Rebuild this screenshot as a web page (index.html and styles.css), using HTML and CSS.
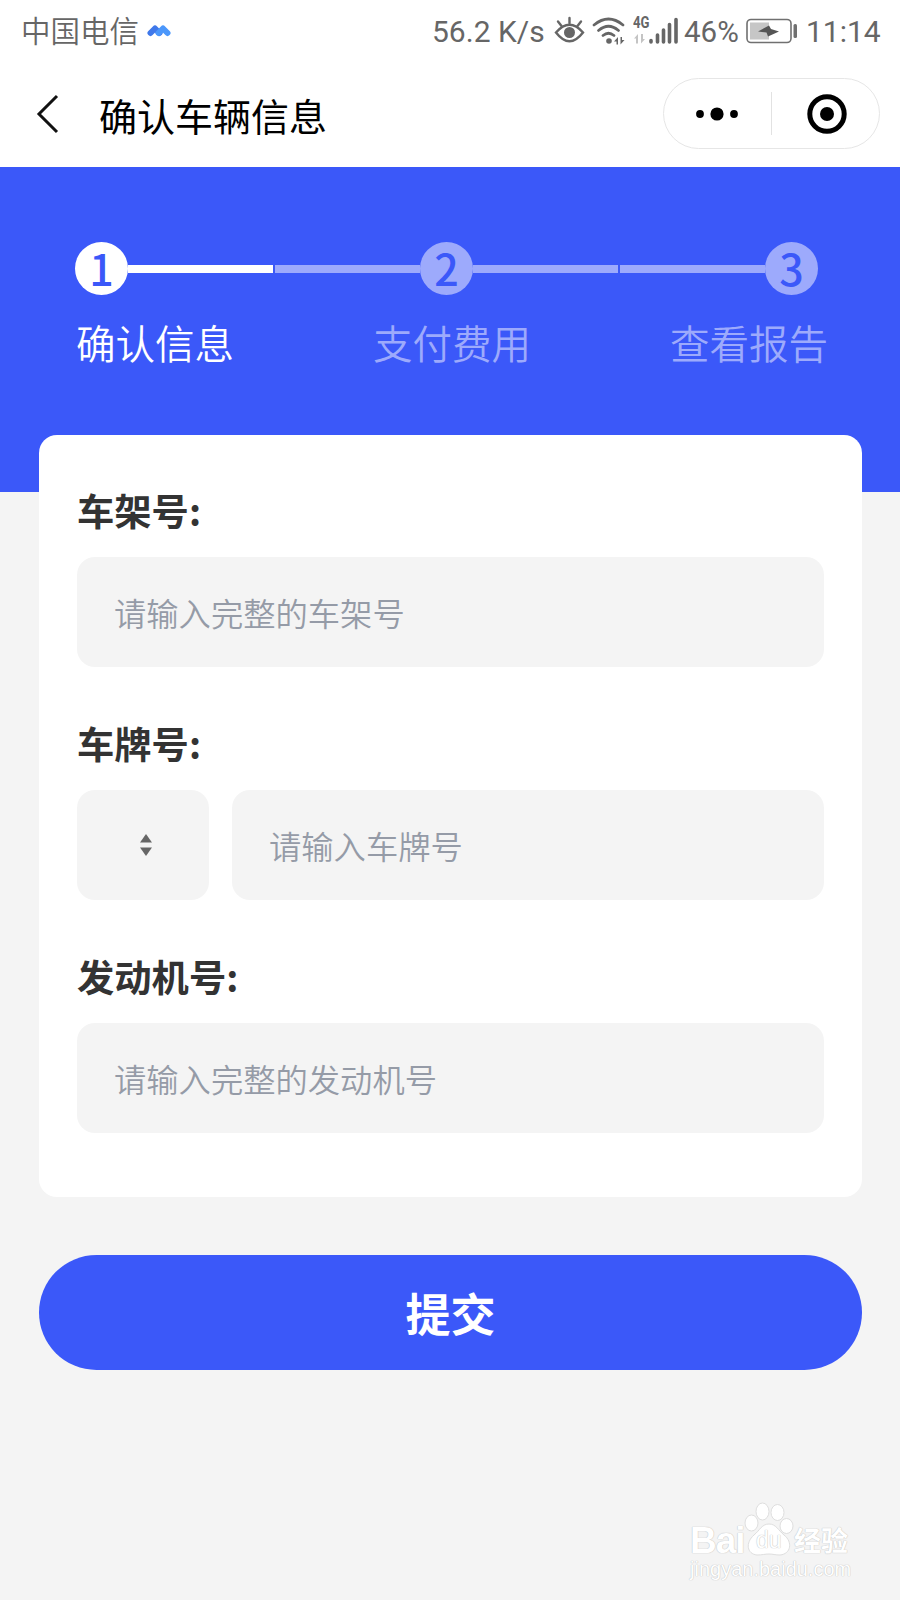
FILE: index.html
```html
<!DOCTYPE html>
<html lang="zh-CN">
<head>
    <meta charset="UTF-8">
    <meta name="viewport" content="width=device-width, initial-scale=1.0">
    <title>确认车辆信息</title>
    <link rel="stylesheet" href="styles.css">
</head>
<body>
    <div class="status-bar">
        <span class="carrier">中国电信</span>
        <svg class="carrier-icon" width="24" height="14" viewBox="0 0 24 14">
            <path d="M3.500 9L8 4.500L12.500 9" fill="none" stroke="#3f78ea" stroke-width="6" stroke-linejoin="round" stroke-linecap="round"/>
            <path d="M11.500 9L16 4.500L20.500 9" fill="none" stroke="#4b97fb" stroke-width="6" stroke-linejoin="round" stroke-linecap="round"/>
        </svg>
        <span class="speed">56.2 K/s</span>
        <svg class="eye-icon" width="31" height="28" viewBox="0 0 31 28" fill="none" stroke="#666" stroke-width="2.400" stroke-linecap="round">
            <path d="M2 16.500Q15.500 1 29 16.500Q15.500 34 2 16.500Z"/>
            <path d="M15.500 2V7M4 5.500L7.500 10M27 5.500L23.500 10"/>
            <circle cx="15.500" cy="16.500" r="5.500" fill="#666" stroke="none"/>
        </svg>
        <svg class="wifi-icon" width="34" height="28" viewBox="0 0 34 28" fill="none" stroke="#666" stroke-width="2.700" stroke-linecap="round">
            <path d="M2 8Q16.500 -4 31 8M6.500 13.500Q16.500 5 26.500 13.500M11 18.500Q16.500 14 22 18.500"/>
            <circle cx="17" cy="24" r="2.800" fill="#666" stroke="none"/>
            <path d="M22 24.500L26 20V27.500H24.500V24.500ZM32.500 23L28.500 27.500V20H30V23Z" fill="#666" stroke="none"/>
        </svg>
        <div class="signal">
            <span class="network">4G</span>
            <svg width="46" height="28" viewBox="0 0 46 28">
                <path d="M1 21.500L5 17V26.500H3V21.500ZM12 22L8 26.500V17H10V22Z" fill="#c4c4c4"/>
                <path d="M18 23.500V25M24.500 18V25M30.500 13V25M36.500 7.500V25M43 2.500V25" stroke="#666" stroke-width="3.600" stroke-linecap="round"/>
            </svg>
        </div>
        <span class="percent">46%</span>
        <svg class="battery-icon" width="52" height="26" viewBox="0 0 52 26">
            <rect x="1" y="1.500" width="44" height="23" rx="4" fill="#fff" stroke="#707070" stroke-width="1.600"/>
            <rect x="4" y="4.500" width="19" height="17" fill="#c6c6c6"/>
            <path d="M12 13.500L23 7.500L25 11L33 13.500L22 18.500L20.500 14.500Z" fill="#555"/>
            <rect x="47.500" y="6" width="3.500" height="14" rx="1.500" fill="#707070"/>
        </svg>
        <span class="time">11:14</span>
    </div>

    <div class="nav">
        <svg class="back" width="24" height="40" viewBox="0 0 24 40">
            <path d="M21 2L3 20L21 38" fill="none" stroke="#111" stroke-width="3"/>
        </svg>
        <h1>确认车辆信息</h1>
        <div class="capsule">
            <svg class="more" width="44" height="16" viewBox="0 0 44 16">
                <circle cx="5" cy="8" r="3.900"/>
                <circle cx="22" cy="8" r="6.600"/>
                <circle cx="39" cy="8" r="3.900"/>
            </svg>
            <span class="divider"></span>
            <svg class="target" width="40" height="40" viewBox="0 0 40 40">
                <circle cx="20" cy="20" r="17.200" fill="none" stroke="#000" stroke-width="5"/>
                <circle cx="20" cy="20" r="7"/>
            </svg>
        </div>
    </div>

    <div class="banner">
        <div class="steps">
            <span class="num active">1</span>
            <span class="line active"></span>
            <span class="line"></span>
            <span class="num">2</span>
            <span class="line"></span>
            <span class="line"></span>
            <span class="num">3</span>
        </div>
        <div class="step-names">
            <span class="active">确认信息</span>
            <span>支付费用</span>
            <span>查看报告</span>
        </div>
    </div>

    <form class="card">
        <label for="vin">车架号:</label>
        <input type="text" id="vin" placeholder="请输入完整的车架号">
        <label for="plate">车牌号:</label>
        <div class="row">
            <button type="button" class="province">
                <svg width="12" height="22" viewBox="0 0 12 22" fill="#666">
                    <path d="M6 0L12 8.500H0Z"/>
                    <path d="M0 13.500H12L6 22Z"/>
                </svg>
            </button>
            <input type="text" id="plate" placeholder="请输入车牌号">
        </div>
        <label for="engine">发动机号:</label>
        <input type="text" id="engine" placeholder="请输入完整的发动机号">
    </form>

    <button class="submit">提交</button>

    <div class="watermark">
        <div class="brand">
            <span class="bai">Bai</span>
            <div class="paw">
                <svg width="50" height="54" viewBox="0 0 50 54" fill="#fff" stroke="#dedede" stroke-width="1">
                    <ellipse cx="7.500" cy="21" rx="6.500" ry="8"/>
                    <ellipse cx="18.500" cy="9.500" rx="6.500" ry="8.500"/>
                    <ellipse cx="33.500" cy="10.500" rx="6.500" ry="8"/>
                    <ellipse cx="42.500" cy="24" rx="6.500" ry="7.500"/>
                    <path d="M25 22C32 22 34 28 40 33C49 40 47 52 36 53C31 53 29 52 25 52C21 52 18 53 13 53C3 52 1 41 10 33C16 28 18 22 25 22Z"/>
                </svg>
                <span class="du">du</span>
            </div>
            <span class="jingyan">经验</span>
        </div>
        <span class="site">jingyan.baidu.com</span>
    </div>
</body>
</html>
```
FILE: styles.css
```css
* {
    box-sizing: border-box;
}
body {
    margin: 0;
    height: 1600px;
    position: relative;
    overflow: hidden;
    font-family: "Noto Sans CJK SC", sans-serif;
    background-color: #f4f4f4;
}
.status-bar {
    display: flex;
    align-items: center;
    height: 62px;
    padding-left: 21px;
    background: white;
    color: #666;
    font-family: Roboto, "Noto Sans CJK SC", sans-serif;
    font-size: 30px;
    line-height: 62px;
    white-space: nowrap;
}
.carrier {
    width: 118px;
    padding-top: 2px;
    font-size: 29.5px;
    font-weight: 350;
}
.carrier-icon {
    margin-left: 8px;
}
.speed {
    width: 122px;
    margin-left: 261px;
    padding-top: 1px;
}
.eye-icon {
    margin-bottom: 2px;
}
.wifi-icon {
    margin-left: 7px;
}
.signal {
    position: relative;
    width: 46px;
    height: 28px;
    margin-left: 7px;
}
.signal svg {
    display: block;
}
.network {
    position: absolute;
    left: 0;
    top: -2px;
    font-size: 16px;
    font-weight: bold;
    line-height: 16px;
    transform: scaleX(0.82);
    transform-origin: left;
}
.percent {
    width: 55px;
    margin-left: 5px;
    padding-top: 1px;
    font-size: 29.5px;
}
.battery-icon {
    margin-left: 7px;
}
.time {
    margin-left: 8px;
    padding-top: 1px;
}
.nav {
    display: flex;
    align-items: center;
    height: 105px;
    padding: 0 20px 2px 36px;
    background: white;
}
.nav h1 {
    margin: 2px 0 0 39px;
    font-size: 38px;
    font-weight: normal;
    line-height: 56px;
}
.capsule {
    display: flex;
    align-items: center;
    width: 217px;
    height: 71px;
    margin-left: auto;
    border: 1px solid #e6e6e6;
    border-radius: 36px;
}
.more {
    margin-left: 31px;
}
.divider {
    width: 1px;
    height: 43px;
    margin-left: 32px;
    background: #e2e2e2;
}
.target {
    margin-left: 35px;
}
.banner {
    height: 325px;
    padding-top: 75px;
    background: #3b58f9;
}
.steps {
    display: flex;
    align-items: center;
    margin: 0 82px 0 75px;
}
.num {
    width: 53px;
    height: 53px;
    border-radius: 50%;
    background: #9daafc;
    color: #3b58f9;
    font-size: 43px;
    font-weight: 500;
    line-height: 50px;
    text-align: center;
}
.line {
    flex: 1;
    height: 8px;
    background: #9daafc;
}
.line + .line {
    margin-left: 2px;
}
.num.active,
.line.active {
    background: white;
}
.step-names {
    display: flex;
    justify-content: space-between;
    margin: 18px 72px 0 76px;
    color: #9daafc;
    font-size: 39.5px;
    font-weight: 350;
    line-height: 58px;
}
.step-names .active {
    color: white;
}
.card {
    position: relative;
    height: 762px;
    margin: -57px 38px 0 39px;
    padding: 48px 38px 0;
    border-radius: 18px;
    background: white;
}
.card label {
    display: block;
    height: 74px;
    color: #333;
    font-size: 37.3px;
    font-weight: bold;
    line-height: 54px;
}
.card input {
    display: block;
    width: 100%;
    height: 110px;
    margin: 0 0 49px;
    padding: 0 37px 1px;
    border: none;
    border-radius: 18px;
    background: #f4f4f4;
    font-family: inherit;
    font-size: 32.3px;
    font-weight: 350;
}
.card input::placeholder {
    color: #959ba7;
}
.row {
    display: flex;
    gap: 23px;
}
.row input {
    flex: 1;
}
.province {
    width: 132px;
    height: 110px;
    padding: 0 0 0 6px;
    border: none;
    border-radius: 18px;
    background: #f4f4f4;
}
.province svg {
    display: block;
    margin: 0 auto;
}
.submit {
    display: block;
    width: 823px;
    height: 115px;
    margin: 58px 38px 0 39px;
    padding: 0;
    border: none;
    border-radius: 58px;
    background: #3b58f9;
    color: white;
    font-family: inherit;
    font-size: 45px;
    font-weight: bold;
}
.watermark {
    position: absolute;
    left: 690px;
    top: 1502px;
    width: 165px;
    color: white;
    text-shadow: 0 0 1px #bbb, 0 0 1px #ccc;
    white-space: nowrap;
}
.brand {
    display: flex;
    height: 54px;
}
.bai {
    width: 54px;
    padding-top: 19px;
    font-family: "Liberation Sans", sans-serif;
    font-size: 37px;
    font-weight: bold;
    line-height: 40px;
    letter-spacing: -1px;
}
.paw {
    position: relative;
    width: 50px;
}
.du {
    position: absolute;
    left: 12px;
    top: 25px;
    font-family: "Liberation Sans", sans-serif;
    font-size: 23px;
    line-height: 26px;
}
.jingyan {
    padding-top: 18px;
    font-size: 27px;
    font-weight: bold;
    line-height: 40px;
}
.site {
    display: block;
    font-family: "Liberation Sans", sans-serif;
    font-size: 20px;
    line-height: 26px;
}
```
